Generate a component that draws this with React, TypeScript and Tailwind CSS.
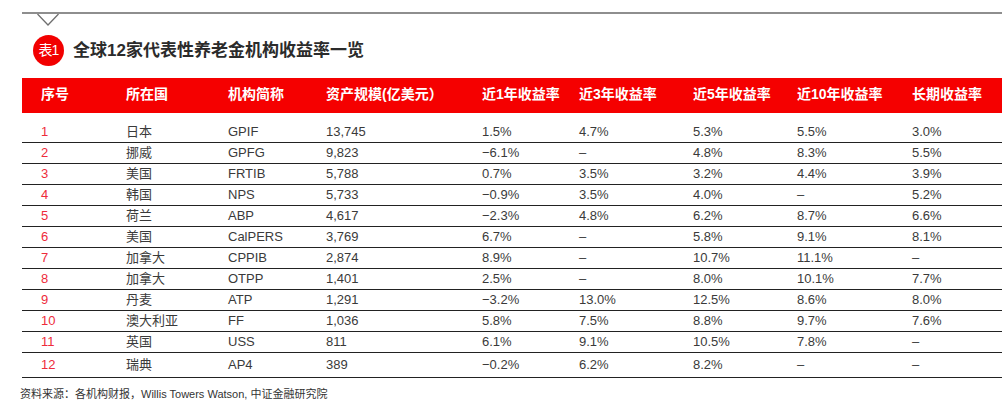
const headers = [
  "序号",
  "所在国",
  "机构简称",
  "资产规模(亿美元）",
  "近1年收益率",
  "近3年收益率",
  "近5年收益率",
  "近10年收益率",
  "长期收益率",
];

// rank, country, fund, assets, 1y, 3y, 5y, 10y, long-term
const rows: string[][] = [
  ["1", "日本", "GPIF", "13,745", "1.5%", "4.7%", "5.3%", "5.5%", "3.0%"],
  ["2", "挪威", "GPFG", "9,823", "−6.1%", "–", "4.8%", "8.3%", "5.5%"],
  ["3", "美国", "FRTIB", "5,788", "0.7%", "3.5%", "3.2%", "4.4%", "3.9%"],
  ["4", "韩国", "NPS", "5,733", "−0.9%", "3.5%", "4.0%", "–", "5.2%"],
  ["5", "荷兰", "ABP", "4,617", "−2.3%", "4.8%", "6.2%", "8.7%", "6.6%"],
  ["6", "美国", "CalPERS", "3,769", "6.7%", "–", "5.8%", "9.1%", "8.1%"],
  ["7", "加拿大", "CPPIB", "2,874", "8.9%", "–", "10.7%", "11.1%", "–"],
  ["8", "加拿大", "OTPP", "1,401", "2.5%", "–", "8.0%", "10.1%", "7.7%"],
  ["9", "丹麦", "ATP", "1,291", "−3.2%", "13.0%", "12.5%", "8.6%", "8.0%"],
  ["10", "澳大利亚", "FF", "1,036", "5.8%", "7.5%", "8.8%", "9.7%", "7.6%"],
  ["11", "英国", "USS", "811", "6.1%", "9.1%", "10.5%", "7.8%", "–"],
  ["12", "瑞典", "AP4", "389", "−0.2%", "6.2%", "8.2%", "–", "–"],
];

const cols =
  "grid grid-cols-[85px_102px_98px_156px_97px_114px_104px_115px_1fr] pl-[19px]";

export default function App() {
  return (
    <div
      className="h-[404px] w-[1008px] overflow-hidden bg-white pt-[12px] text-[#333]"
      style={{ fontFamily: '"Liberation Sans", "Noto Sans CJK SC", sans-serif' }}
    >
      {/* top rule with notch */}
      <div className="ml-[22px] h-[2px] w-[980px] bg-[#8e8e8e]" />
      <svg width="22" height="12" viewBox="0 0 22 12" className="ml-[37px] block">
        <polyline
          points="0.5,0 11,11 21.5,0"
          fill="none"
          stroke="#6f6f6f"
          strokeWidth="1.3"
        />
      </svg>

      {/* title */}
      <div className="mt-[9px] ml-[33px] flex h-[31px] items-center gap-[9px]">
        <div className="flex h-[31px] w-[31px] items-center justify-center rounded-full bg-[#f20000] text-[14px] text-white tracking-[-1px]">
          表1
        </div>
        <h1 className="text-[17px] font-bold text-[#2b2b2b]">
          全球12家代表性养老金机构收益率一览
        </h1>
      </div>

      {/* table */}
      <div className="ml-[22px] w-[980px]">
        <div className={`${cols} mt-[12px] h-[35px] items-center bg-[#f50000] pb-[2px] text-[14px] font-bold text-white`}>
          {headers.map((h) => (
            <div key={h} className="whitespace-nowrap">
              {h}
            </div>
          ))}
        </div>

        <div className="mt-[9px]">
          {rows.map((r, i) => (
            <div
              key={r[0]}
              className={`${cols} items-center border-b border-[#222] text-[13px] ${
                i === rows.length - 1 ? "h-[25px]" : "h-[21px]"
              }`}
            >
              {r.map((c, j) => (
                <div
                  key={j}
                  className={j === 0 ? "text-[#ee2b3b]" : "text-[#3a3a3a]"}
                >
                  {c}
                </div>
              ))}
            </div>
          ))}
        </div>
      </div>

      <p className="mt-[8px] ml-[20px] text-[11px] leading-[16px] text-[#333]">
        资料来源：各机构财报，Willis Towers Watson, 中证金融研究院
      </p>
    </div>
  );
}
